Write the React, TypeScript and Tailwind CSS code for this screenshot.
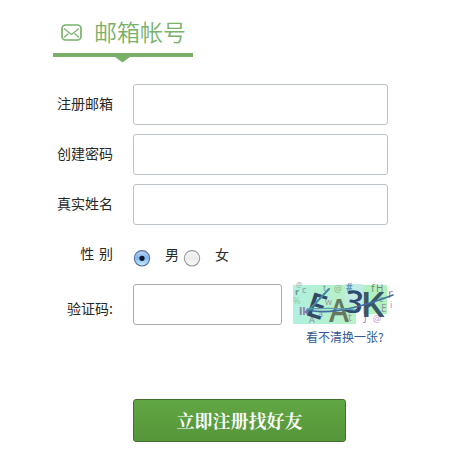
import React, { useState } from "react";

function Field({ label }: { label: string }) {
  return (
    <label className="flex h-[41px] items-center">
      <span className="w-[60px] pb-[4px] text-right text-[14px] leading-5">{label}</span>
      <input
        type="text"
        className="ml-5 h-[41px] w-[255px] rounded-[3px] border border-[#bbc2c8] bg-white px-2 outline-none"
      />
    </label>
  );
}

function Radio({ checked, onSelect }: { checked: boolean; onSelect: () => void }) {
  return (
    <button type="button" role="radio" aria-checked={checked} onClick={onSelect} className="h-[17px] w-[18px] shrink-0">
      <svg width="18" height="17" viewBox="0 0 18 17">
        <defs>
          <linearGradient id="radioOn" x1="0" y1="0" x2="0" y2="1">
            <stop offset="0" stopColor="#c3d9f3" />
            <stop offset=".45" stopColor="#7fb4ec" />
            <stop offset="1" stopColor="#c8f0ff" />
          </linearGradient>
          <linearGradient id="radioOff" x1="0" y1="0" x2="0" y2="1">
            <stop offset="0" stopColor="#ffffff" />
            <stop offset=".5" stopColor="#ebebeb" />
            <stop offset="1" stopColor="#fbfbfb" />
          </linearGradient>
        </defs>
        <circle
          cx="9"
          cy="8.3"
          r="7.7"
          fill={checked ? "url(#radioOn)" : "url(#radioOff)"}
          stroke={checked ? "#5a6f9f" : "#999999"}
          strokeWidth="1.1"
        />
        {checked && <circle cx="9" cy="8.3" r="2.6" fill="#0a1530" />}
      </svg>
    </button>
  );
}

function Captcha() {
  return (
    <svg
      width="102"
      height="41"
      viewBox="0 0 102 41"
      className="block overflow-visible"
      fontFamily="'Open Sans', sans-serif"
    >
      <defs>
        <linearGradient id="mint" x1="0" y1="0" x2="1" y2="0">
          <stop offset="0" stopColor="#b0f0df" />
          <stop offset="1" stopColor="#b8f1c6" />
        </linearGradient>
      </defs>
      <rect x="0" y="1" width="63" height="39" fill="url(#mint)" />
      <rect x="52" y="0" width="18" height="20" fill="#c0ece4" />
      <rect x="70" y="1" width="24" height="29" fill="#b1f1bd" />
      <g fontSize="9" fill="#7b7992" opacity=".75">
        <text x="2" y="11" fill="#55766f" fontWeight="700">r</text>
        <text x="9" y="9">c</text>
        <text x="3" y="3" fontSize="7" fill="#9a8e82">@</text>
        <text x="0" y="20" fill="#92ba85">%</text>
        <text x="30" y="7" fill="#786080">t</text>
        <text x="41" y="8" fill="#7a9b78">@</text>
        <text x="53" y="7" fontSize="10" fontWeight="700" fill="#4979b4">#</text>
        <text x="6" y="31" fontSize="11" fill="#8156a0" fontWeight="700">lk</text>
        <text x="16" y="39" fill="#746493">A</text>
        <text x="25" y="33" fill="#805ca0">a</text>
        <text x="32" y="21" fill="#9b7183">w</text>
        <text x="55" y="37" fontSize="11" fill="#ac7386">t</text>
        <text x="78" y="8" fontSize="11" fill="#53706a">f</text>
        <text x="83" y="8" fontSize="10" fill="#6c5873">H</text>
        <text x="95" y="14" fontSize="12" fill="#7b498c">r</text>
        <text x="97" y="24" fill="#8c62a0">i</text>
        <text x="86" y="18" fill="#518a68">c</text>
        <text x="88" y="28" fontSize="10" fill="#8b6a9e">E</text>
        <text x="71" y="37" fontSize="10" fill="#7851a0">J</text>
        <text x="80" y="38" fill="#b26cac">@</text>
      </g>
      <g fontWeight="600">
        <text transform="translate(11 30.5) rotate(18)" fontSize="34" fill="#334867">E</text>
        <text transform="translate(36 38)" fontSize="32" textLength="20" lengthAdjust="spacingAndGlyphs" fill="#65785f">A</text>
        <text transform="translate(50 27.5) rotate(8)" fontSize="31" textLength="19" lengthAdjust="spacingAndGlyphs" fill="#2f4a70">3</text>
        <text transform="translate(67.5 33)" fontSize="34" textLength="24" lengthAdjust="spacingAndGlyphs" fill="#395768">K</text>
      </g>
      <g fill="none" strokeLinecap="round">
        <path d="M14 28 36 5" stroke="#4787a3" strokeWidth="2" />
        <path d="M15 26c20 5 51-2 85-15" stroke="#426ca1" strokeWidth="1.6" />
        <path d="M14 25c17-1 35-1 48 1" stroke="#59a0ae" strokeWidth="1.3" />
      </g>
    </svg>
  );
}

export default function App() {
  const [gender, setGender] = useState("male");

  return (
    <main className="h-[470px] w-[473px] overflow-hidden bg-white pl-[53px] pt-[15px] font-['Noto_Sans_CJK_SC',sans-serif] text-[14px] text-[#282828]">
      <header className="w-[140px]">
        <div className="flex h-[38px] items-center pb-[3px] pl-2">
          <svg width="21" height="17" viewBox="0 0 21 17" fill="none" stroke="#7ab169" className="shrink-0">
            <rect x="1" y="1" width="19" height="15" rx="3.5" strokeWidth="1.7" />
            <path d="m3 4.5 7.5 6 7.5-6M3 13.5l4.5-4m10.5 4-4.5-4" strokeWidth="1.2" />
          </svg>
          <h1 className="ml-3 whitespace-nowrap pb-[3px] text-[23px] font-[350] leading-[34px] text-[#7ab169]">邮箱帐号</h1>
        </div>
        <div className="h-1 bg-[#7ab169]" />
        <svg width="16" height="6" viewBox="0 0 16 6" className="mx-auto block">
          <path d="M0 0h15L7.5 5.5Z" fill="#7ab169" />
        </svg>
      </header>

      <form className="mt-[21px]" onSubmit={(event) => event.preventDefault()}>
        <div className="flex flex-col gap-[9px]">
          <Field label="注册邮箱" />
          <Field label="创建密码" />
          <Field label="真实姓名" />
        </div>

        <div role="radiogroup" aria-label="性别" className="mt-[18px] flex h-[24px] items-start leading-5">
          <span className="w-[60px] text-right [word-spacing:1.5px]">性 别</span>
          <div className="ml-5 flex items-start pt-[7px]">
            <Radio checked={gender === "male"} onSelect={() => setGender("male")} />
            <span className="-mt-[6px] ml-[14px] w-[18px]">男</span>
            <Radio checked={gender === "female"} onSelect={() => setGender("female")} />
            <span className="-mt-[6px] ml-[14px]">女</span>
          </div>
        </div>

        <div className="mt-[17px] flex items-start">
          <label className="flex h-[41px] items-center">
            <span className="w-[60px] whitespace-nowrap pt-[6px] text-right leading-5">验证码:</span>
            <input type="text" aria-label="验证码" className="ml-5 h-[41px] w-[149px] rounded-[3px] border border-[#aaaaaa] bg-white px-2 outline-none" />
          </label>
          <div className="ml-[11px]">
            <Captcha />
            <a href="#" className="ml-[13px] mt-[3px] block whitespace-nowrap text-[12px] leading-[18px] text-[#315a91]">
              看不清换一张?
            </a>
          </div>
        </div>

        <button type="submit" className="ml-20 mt-[53px] flex h-[43px] w-[213px] items-center justify-center rounded-[3px] border border-[#426f2e] bg-linear-to-b from-[#61a644] to-[#559639] pb-px font-['Noto_Serif_CJK_SC','Noto_Sans_CJK_SC',serif] text-[18px] font-bold text-white">
          立即注册找好友
        </button>
      </form>
    </main>
  );
}
